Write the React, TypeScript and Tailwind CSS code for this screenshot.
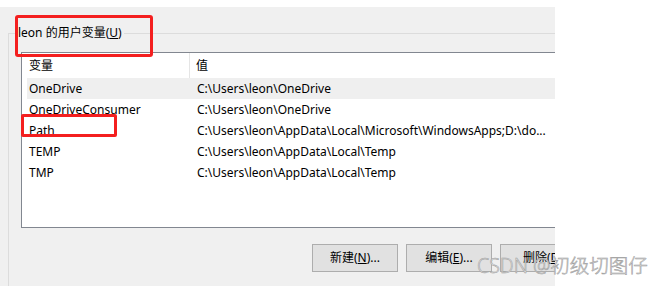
import React from "react";

const rows: [string, string][] = [
  ["OneDrive", "C:\\Users\\leon\\OneDrive"],
  ["OneDriveConsumer", "C:\\Users\\leon\\OneDrive"],
  ["Path", "C:\\Users\\leon\\AppData\\Local\\Microsoft\\WindowsApps;D:\\do..."],
  ["TEMP", "C:\\Users\\leon\\AppData\\Local\\Temp"],
  ["TMP", "C:\\Users\\leon\\AppData\\Local\\Temp"],
];

const font = { fontFamily: '"Noto Sans", "Noto Sans CJK SC", sans-serif' };

export default function App() {
  return (
    <div className="relative w-[665px] h-[286px] bg-white overflow-hidden text-[12px] text-black" style={font}>
      <div className="pt-[7px]">
        <div className="w-[555px] h-[279px] bg-[#f0f0f0] overflow-hidden pl-[8px] pt-[26px]">
          <div className="relative w-[620px] h-[300px] border-t border-l border-[#dcdcdc]">
            <div className="absolute left-[9px] top-[-10px] bg-[#f0f0f0] pr-[2px] leading-[18px]">
              leon 的用户变量(<span className="underline">U</span>)
            </div>
            <div className="ml-[12px] mt-[18px] w-[600px] h-[176px] border border-[#828790] bg-white">
              <div className="flex h-[25px] items-center">
                <div className="w-[168px] h-full pl-[7px] flex items-center border-r border-[#e5e5e5]">变量</div>
                <div className="pl-[6px]">值</div>
              </div>
              <div className="pl-[5px]">
                {rows.map(([k, v], i) => (
                  <div
                    key={k}
                    className={`flex h-[21px] items-center whitespace-nowrap ${i === 0 ? "bg-[#efefef]" : ""}`}
                  >
                    <div className="w-[170px] pl-[2px]">{k}</div>
                    <div>{v}</div>
                  </div>
                ))}
              </div>
            </div>
            <div className="flex gap-[8px] ml-[303px] mt-[16px]">
              {[
                ["新建(", "N", ")..."],
                ["编辑(", "E", ")..."],
                ["删除(", "D", ")"],
              ].map(([a, u, b]) => (
                <div
                  key={a}
                  className="w-[86px] h-[28px] shrink-0 flex items-center justify-center bg-[#e1e1e1] border border-[#adadad]"
                >
                  {a}
                  <span className="underline">{u}</span>
                  {b}
                </div>
              ))}
            </div>
          </div>
        </div>
      </div>
      <div className="absolute left-[15px] top-[15px] w-[138px] h-[42px] border-[3px] border-[#f41f1f] rounded-[3px]" />
      <div className="absolute left-[21px] top-[114px] w-[96px] h-[23px] border-[3px] border-[#f41f1f] rounded-[2px]" />
      <div
        className="absolute left-[477px] top-[254px] text-[19.5px] leading-[24px] text-[#e4e4e4] whitespace-nowrap font-light"
        style={{ fontFamily: '"Noto Sans", "Noto Sans CJK SC", sans-serif', WebkitTextStroke: "0.5px #9a9a9a" }}
      >
        CSDN @初级切图仔
      </div>
    </div>
  );
}
